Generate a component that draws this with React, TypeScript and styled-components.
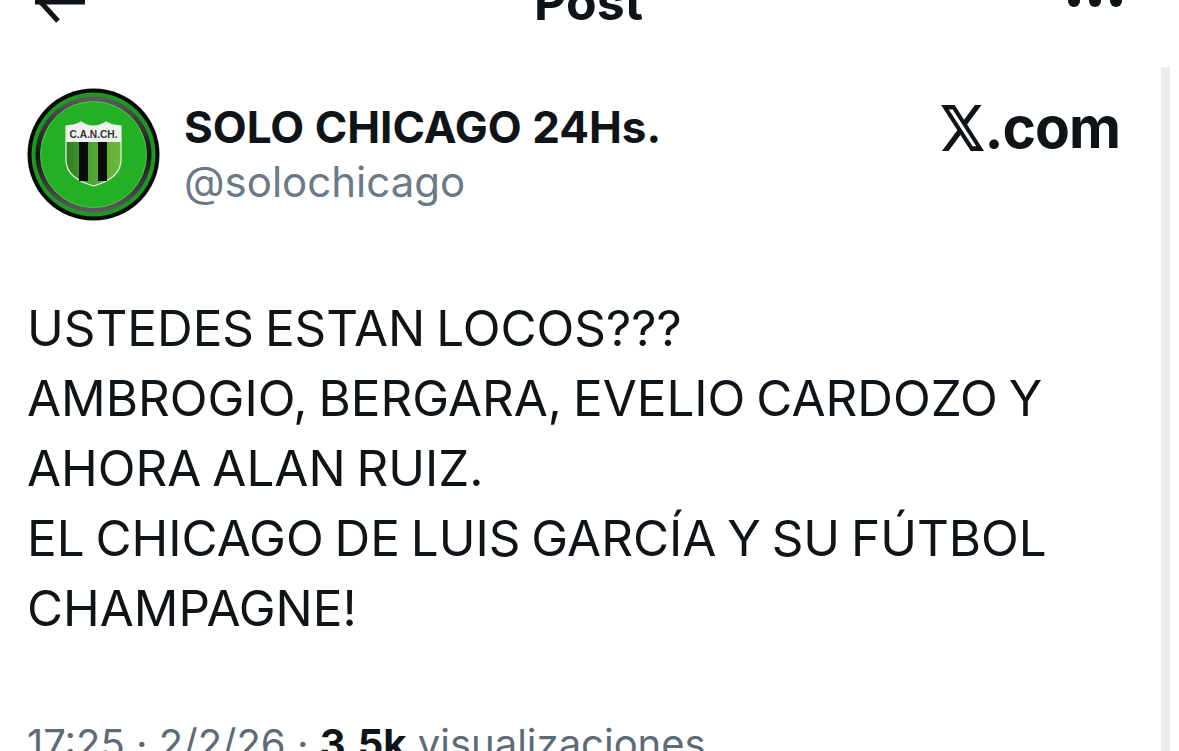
import React from 'react'
import styled, { createGlobalStyle } from 'styled-components'

const GlobalStyle = createGlobalStyle`
  html, body {
    margin: 0;
    padding: 0;
    background: #fff;
    height: 751px;
    overflow: hidden;
  }
  body {
    font-family: Inter, "Liberation Sans", sans-serif;
    color: #0f1419;
  }
`

const Page = styled.div`
  width: 1179px;
  height: 751px;
  overflow: hidden;
  display: flex;
  flex-direction: column;
`

const TopBar = styled.header`
  height: 23px;
  flex: none;
  overflow: hidden;
  display: flex;
  align-items: flex-end;
  justify-content: space-between;
  padding: 0 57px 0 35px;
`

const BackIcon = styled.svg`
  width: 50px;
  height: 23px;
  display: block;
`

const BarTitle = styled.div`
  font-size: 50px;
  font-weight: 700;
  line-height: 48px;
  margin-bottom: -3px;
  margin-left: 24px;
`

const Dots = styled.svg`
  width: 54px;
  height: 23px;
  display: block;
`

const Main = styled.div`
  flex: 1;
  display: flex;
  margin-top: 44px;
  min-height: 0;
`

const Tweet = styled.article`
  width: 1134px;
  flex: none;
  margin-left: 27px;
  padding: 21px 41px 0 0;
  box-sizing: border-box;
`

const Scrollbar = styled.div`
  width: 9px;
  flex: none;
  background: #ececec;
`

const Head = styled.div`
  display: flex;
  align-items: flex-start;
`

const Avatar = styled.svg`
  width: 133px;
  height: 133px;
  flex: none;
  display: block;
`

const Who = styled.div`
  flex: 1;
  margin-left: 24px;
  padding-top: 13px;
`

const Name = styled.div`
  font-size: 44px;
  font-weight: 700;
  line-height: 52px;
`

const Handle = styled.div`
  font-size: 42px;
  line-height: 58px;
  color: #6c7a87;
`

const Brand = styled.div`
  display: flex;
  align-items: flex-end;
  margin-top: 17px;
`

const BrandMark = styled.svg`
  width: 43px;
  height: 46px;
  display: block;
`

const BrandText = styled.span`
  font-size: 57px;
  font-weight: 700;
  line-height: 46px;
  letter-spacing: -1px;
`

const Body = styled.p`
  margin: 72px 0 0 0;
  font-size: 49.4px;
  line-height: 70px;
  word-spacing: -3px;
  white-space: pre-line;
`

const Meta = styled.div`
  margin: 76px 0 0 0;
  font-size: 40px;
  line-height: 50px;
  color: #5d6b78;
  white-space: nowrap;
`

const MetaCount = styled.b`
  color: #0f1419;
  font-weight: 700;
`

function ClubBadge() {
  return (
    <Avatar viewBox="0 0 133 133">
      <defs>
        <linearGradient id="ring" x1="0" y1="0" x2="0" y2="1">
          <stop offset="0" stopColor="#5c5c5c" />
          <stop offset="0.5" stopColor="#161616" />
          <stop offset="1" stopColor="#5c5c5c" />
        </linearGradient>
        <linearGradient id="shield" x1="0" y1="0" x2="1" y2="0">
          <stop offset="0" stopColor="#2f7d22" />
          <stop offset="0.5" stopColor="#4ea82f" />
          <stop offset="1" stopColor="#6fb83a" />
        </linearGradient>
      </defs>
      <circle cx="66.5" cy="66.5" r="66" fill="#070b07" />
      <circle cx="66.5" cy="66.5" r="62" fill="#1c9a20" />
      <circle cx="66.5" cy="66.5" r="58" fill="url(#ring)" />
      <circle cx="66.5" cy="66.5" r="53" fill="#24b024" stroke="#4fc84a" strokeWidth="1" />
      <path d="M39 38 Q50 37 54 34 Q60 38 66.5 38 Q73 38 79 34 Q83 37 94 38 V72 Q94 90 66.5 98 Q39 90 39 72 Z" fill="url(#shield)" stroke="#eef2ee" strokeWidth="1.2" />
      <path d="M39 38 Q50 37 54 34 Q60 38 66.5 38 Q73 38 79 34 Q83 37 94 38 V54 H39 Z" fill="#f0f0f0" />
      <rect x="52" y="54" width="9" height="39" fill="#0b0b0b" />
      <rect x="71" y="54" width="9" height="39" fill="#0b0b0b" />
      <text x="66.5" y="50" textAnchor="middle" fontFamily="'Liberation Sans', sans-serif" fontSize="11" fontWeight="700" textLength="48" lengthAdjust="spacingAndGlyphs" fill="#333">C.A.N.CH.</text>
    </Avatar>
  )
}

export default function App() {
  return (
    <Page>
      <GlobalStyle />
      <TopBar>
        <BackIcon viewBox="0 0 50 23">
          <path d="M0 2 H50" stroke="#0f1419" strokeWidth="5" />
          <path d="M2 -2 L23 21" stroke="#0f1419" strokeWidth="5" fill="none" />
        </BackIcon>
        <BarTitle>Post</BarTitle>
        <Dots viewBox="0 0 54 23">
          <circle cx="6" cy="1" r="6" fill="#0f1419" />
          <circle cx="27" cy="1" r="6" fill="#0f1419" />
          <circle cx="48" cy="1" r="6" fill="#0f1419" />
        </Dots>
      </TopBar>
      <Main>
        <Tweet>
          <Head>
            <ClubBadge />
            <Who>
              <Name>SOLO CHICAGO 24Hs.</Name>
              <Handle>@solochicago</Handle>
            </Who>
            <Brand>
              <BrandMark viewBox="1.2 2.25 21.6 19.5" preserveAspectRatio="none">
                <path d="M18.244 2.25h3.308l-7.227 8.26 8.502 11.24H16.17l-5.214-6.817L4.99 21.75H1.68l7.73-8.835L1.254 2.25H8.08l4.713 6.231zm-1.161 17.52h1.833L7.084 4.126H5.117z" fill="#0f1419" />
              </BrandMark>
              <BrandText>.com</BrandText>
            </Brand>
          </Head>
          <Body>{`USTEDES ESTAN LOCOS???
AMBROGIO, BERGARA, EVELIO CARDOZO Y
AHORA ALAN RUIZ.
EL CHICAGO DE LUIS GARCÍA Y SU FÚTBOL
CHAMPAGNE!`}</Body>
          <Meta>17:25 · 2/2/26 · <MetaCount>3.5k</MetaCount> visualizaciones</Meta>
        </Tweet>
        <Scrollbar />
      </Main>
    </Page>
  )
}
